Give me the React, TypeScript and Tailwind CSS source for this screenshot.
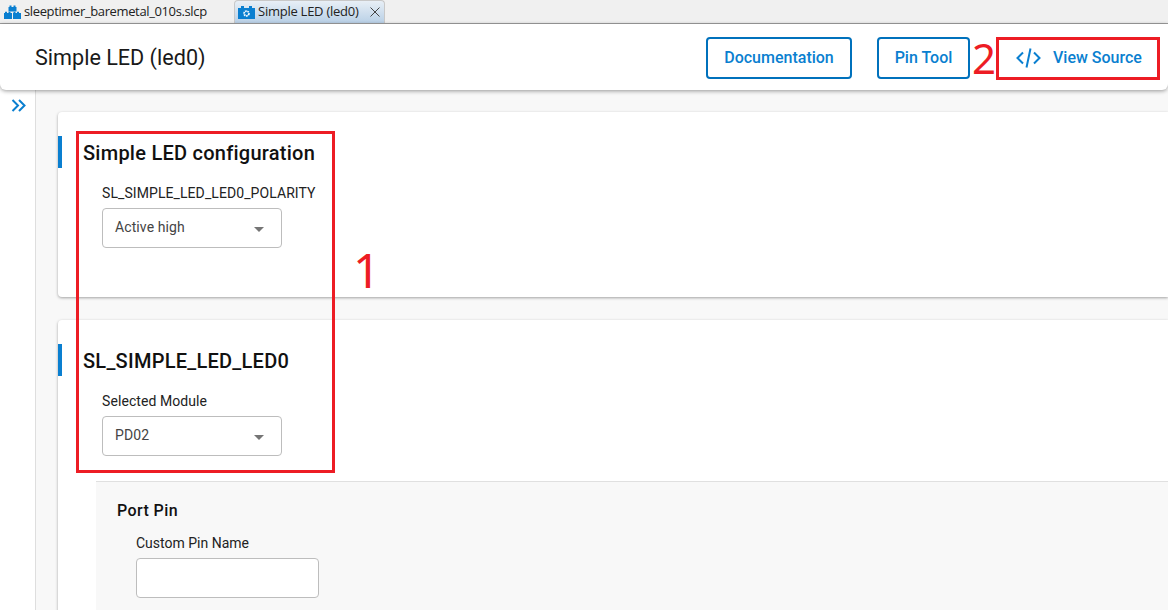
import React from 'react';

const font = { fontFamily: 'Roboto, "Noto Sans", sans-serif' };

function BlocksIcon({ gear = false }: { gear?: boolean }) {
  return (
    <svg width="17" height="14" viewBox="0 0 17 14" fill="#0a7fd0">
      {gear ? (
        <>
          <path d="M0 3h3V1h3v2h5V1h3v2h3v11H0z" />
          <circle cx="8.5" cy="8.5" r="2.4" fill="none" stroke="#fff" strokeWidth="1.8" strokeDasharray="1.6 0.6" />
        </>
      ) : (
        <>
          <path d="M4.5 2h1V0.5h2V2h2V0.5h2V2h1v4.5h-8z" />
          <path d="M0 8h1V6.8h2V8h1.5V6.8h2V8H8v6H0z" />
          <path d="M9 8h.5V6.8h2V8H13V6.8h2V8h2v6H9z" />
        </>
      )}
    </svg>
  );
}

function Select({ value }: { value: string }) {
  return (
    <div className="flex h-10 w-[180px] items-center justify-between rounded border border-[#bdbdbd] bg-white pl-3 pr-[17px] text-sm text-[#444]">
      <span className="mb-0.5 tracking-[0.1px]">{value}</span>
      <span className="mt-0.5 h-0 w-0 border-x-[5px] border-t-[5px] border-x-transparent border-t-[#757575]" />
    </div>
  );
}

function Section({ title, label, value, height, children }: { title: string; label: string; value: string; height: string; children?: React.ReactNode }) {
  return (
    <section className={`relative rounded-l bg-white shadow-[0_1px_3px_rgba(0,0,0,0.35)] ${height}`}>
      <div className="absolute left-0 top-6 h-8 w-1 bg-[#0a7fd0]" />
      <div className="pl-[25px] pt-[28px]">
        <h2 className="text-xl font-medium leading-[26px] tracking-[0.25px] text-[#111]">{title}</h2>
        <div className="pl-[19px] pt-[17px]">
          <div className="text-sm leading-5 tracking-[0.08px] text-[#222]">{label}</div>
          <div className="pt-[5px]">
            <Select value={value} />
          </div>
        </div>
      </div>
      {children}
    </section>
  );
}

export default function App() {
  return (
    <div className="relative h-[610px] w-[1168px] overflow-hidden bg-white" style={font}>
      {/* Tab bar */}
      <div className="flex h-6 items-end border-b border-[#a0a0a0] bg-[#f0f0f0] text-[13px] text-[#222]" style={{ fontFamily: '"Open Sans", "Noto Sans", sans-serif' }}>
        <div className="flex h-[23px] w-[234px] items-center gap-[3px] pl-1">
          <BlocksIcon />
          <span className="tracking-[-0.37px]">sleeptimer_baremetal_010s.slcp</span>
        </div>
        <div className="flex h-[23px] w-[151px] items-center gap-[3px] rounded-t border-x border-t border-[#c8c8c8] bg-gradient-to-b from-[#e8eff6] to-[#b9d0e6] pl-[3px]">
          <BlocksIcon gear />
          <span className="tracking-[-0.25px]">Simple LED (led0)</span>
          <svg className="ml-2" width="10" height="10" viewBox="0 0 10 10" stroke="#444" fill="none">
            <path d="M0.5 0.5l9 9M9.5 0.5l-9 9" />
          </svg>
        </div>
      </div>

      {/* Header */}
      <header className="relative z-10 flex h-[66px] items-center justify-between rounded-b-md bg-white pl-[35px] pr-[7px] shadow-[0_1px_4px_rgba(0,0,0,0.4)]">
        <h1 className="mt-0.5 text-[21.6px] text-[#1a1a1a]">Simple LED (led0)</h1>
        <div className="mt-0.5 flex items-center text-base font-medium text-[#0a7fd0]">
          <button className="h-[42px] w-[146px] rounded border-2 border-[#0071bc]">Documentation</button>
          <button className="ml-[25px] h-[42px] w-[93px] rounded border-2 border-[#0071bc]">Pin Tool</button>
          <button className="ml-[27px] flex h-[42px] w-[164px] items-center gap-[12px] pl-[19px]">
            <svg width="25" height="22" viewBox="0 0 25 22" fill="none" stroke="currentColor" strokeWidth="2">
              <path d="M7 5.5L1.5 11 7 16.5M18 5.5L23.5 11 18 16.5M14.5 1.5L10.5 20.5" />
            </svg>
            View Source
          </button>
        </div>
      </header>

      {/* Body */}
      <div className="flex h-[520px]">
        <aside className="w-9 shrink-0 border-r border-[#dedede] bg-white pl-[11px] pt-2">
          <svg width="15" height="15" viewBox="0 0 15 15" fill="none" stroke="#0a7fd0" strokeWidth="2">
            <path d="M1.5 2L7 7.5 1.5 13M8 2l5.5 5.5L8 13" />
          </svg>
        </aside>
        <main className="flex flex-1 flex-col gap-[23px] overflow-hidden bg-[#f8f8f8] pl-[22px] pt-[22px]">
          <Section title="Simple LED configuration" label="SL_SIMPLE_LED_LED0_POLARITY" value="Active high" height="h-[185px] shrink-0" />
          <Section title="SL_SIMPLE_LED_LED0" label="Selected Module" value="PD02" height="h-[400px] shrink-0">
            <div className="ml-[38px] mt-[25px] h-[200px] border-t border-[#e0e0e0] bg-[#f8f8f8] pl-5 pt-[17px]">
              <h3 className="ml-px text-base font-medium leading-6 tracking-[0.4px] text-[#111]">Port Pin</h3>
              <div className="pl-5 pt-[10px]">
                <div className="text-sm leading-5 text-[#222]">Custom Pin Name</div>
                <div className="mt-[5px] h-10 w-[183px] rounded border border-[#bdbdbd] bg-white" />
              </div>
            </div>
          </Section>
        </main>
      </div>

      {/* Red annotations */}
      <div className="absolute left-[76px] top-[131px] z-20 h-[342px] w-[259px] border-[3px] border-[#ed1c24]" />
      <div className="absolute left-[996px] top-[37px] z-20 h-[43px] w-[164px] border-[3px] border-[#ed1c24]" />
      <span className="absolute left-[353px] top-[242px] z-20 text-[48px] leading-[56px] text-[#ed1c24]" style={{ fontFamily: '"Noto Sans", sans-serif' }}>1</span>
      <span className="absolute left-[972px] top-[30px] z-20 text-[42px] leading-[56px] text-[#ed1c24]" style={{ fontFamily: '"Noto Sans", sans-serif' }}>2</span>
    </div>
  );
}
